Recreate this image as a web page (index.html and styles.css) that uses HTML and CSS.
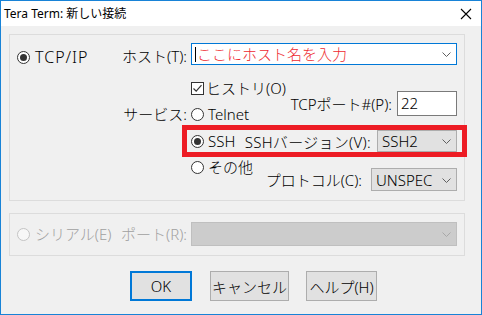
FILE: index.html
```html
<!DOCTYPE html>
<html lang="ja">

<head>
    <meta charset="UTF-8">
    <meta name="viewport" content="width=device-width, initial-scale=1.0">
    <title>Tera Term: 新しい接続</title>
    <link rel="stylesheet" href="styles.css">
</head>

<body>
    <div class="window">
        <div class="titlebar">
            <span class="title">Tera Term: 新しい接続</span>
            <svg class="close" width="12" height="12" viewBox="0 0 12 12">
                <path d="M1 1 L11 11 M11 1 L1 11" stroke="#000" stroke-width="1.1" fill="none" />
            </svg>
        </div>
        <div class="content">
            <!-- TCP/IP -->
            <div class="group tcp">
                <div class="proto">
                    <div class="opt big"><span class="radio on"></span><span class="tcpip">TCP/IP</span></div>
                </div>
                <div class="fields">
                    <div class="lbl host-lbl">ホスト(T):</div>
                    <div class="combo host">
                        <span class="caret"></span>
                        <span class="host-text">ここにホスト名を入力</span>
                        <svg class="chev" width="9" height="5" viewBox="0 0 9 5">
                            <path d="M0.5 0.5 L4.5 4.5 L8.5 0.5" fill="none" stroke="#606060" />
                        </svg>
                    </div>

                    <div class="lbl service-lbl">サービス:</div>
                    <div class="service">
                        <div class="service-opts">
                            <div class="opt chk">
                                <span class="check">
                                    <svg width="11" height="11" viewBox="0 0 11 11">
                                        <path d="M1.5 5.5 L4.2 8.2 L9.5 2.2" fill="none" stroke="#333" stroke-width="1.2" />
                                    </svg>
                                </span>ヒストリ(O)
                            </div>
                            <div class="opt"><span class="radio"></span>Telnet</div>
                        </div>
                        <div class="port">
                            <span>TCPポート#(P):</span>
                            <div class="edit">22</div>
                        </div>
                    </div>

                    <div class="row ssh">
                        <div class="opt"><span class="radio on"></span>SSH</div>
                        <div class="right">
                            <span class="ver-lbl">SSHバージョン(V):</span>
                            <div class="combo ver">SSH2
                                <svg class="chev" width="9" height="5" viewBox="0 0 9 5">
                                    <path d="M0.5 0.5 L4.5 4.5 L8.5 0.5" fill="none" stroke="#606060" />
                                </svg>
                            </div>
                        </div>
                    </div>

                    <div class="row other">
                        <div class="opt"><span class="radio"></span>その他</div>
                        <div class="right proto-sel">
                            <span>プロトコル(C):</span>
                            <div class="combo unspec">UNSPEC
                                <svg class="chev" width="9" height="5" viewBox="0 0 9 5">
                                    <path d="M0.5 0.5 L4.5 4.5 L8.5 0.5" fill="none" stroke="#606060" />
                                </svg>
                            </div>
                        </div>
                    </div>
                </div>
            </div>

            <!-- シリアル -->
            <div class="group serial">
                <div class="proto">
                    <div class="opt big off"><span class="radio dis"></span>シリアル(E)</div>
                </div>
                <div class="lbl off">ポート(R):</div>
                <div class="combo disabled">
                    <svg class="chev" width="9" height="5" viewBox="0 0 9 5">
                        <path d="M0.5 0.5 L4.5 4.5 L8.5 0.5" fill="none" stroke="#a8a8a8" />
                    </svg>
                </div>
            </div>

            <div class="buttons">
                <div class="btn default">OK</div>
                <div class="btn cancel">キャンセル</div>
                <div class="btn help">ヘルプ(H)</div>
            </div>
        </div>
    </div>
</body>

</html>
```

FILE: styles.css
```css
* {
    margin: 0;
    padding: 0;
    box-sizing: border-box;
}

body {
    width: 482px;
    height: 315px;
    overflow: hidden;
    font-family: "Noto Sans", "Noto Sans CJK JP", sans-serif;
    font-size: 15px;
    font-weight: 300;
    color: #000;
}

.window {
    display: flex;
    flex-direction: column;
    width: 482px;
    height: 315px;
    border: 1px solid #1883d7;
    background-color: #f0f0f0;
}

.titlebar {
    display: flex;
    align-items: center;
    justify-content: space-between;
    height: 25px;
    padding: 0 9px 0 3px;
    background-color: #fff;
}

.titlebar .title {
    font-size: 12px;
    font-weight: 400;
    line-height: 16px;
}

.content {
    flex: 1;
    padding: 8px 0 0 8px;
}

.group {
    display: flex;
    width: 456px;
    border: 1px solid #dcdcdc;
    padding: 8px 7px 9px 7px;
}

.proto {
    width: 106px;
    flex-shrink: 0;
}

.opt {
    display: flex;
    align-items: center;
    gap: 4px;
    height: 20px;
    line-height: 20px;
    white-space: nowrap;
}

.opt.big {
    gap: 5px;
}

.tcpip {
    letter-spacing: 1px;
    font-size: 16px;
}

.tcp .proto .opt {
    margin-top: 4px;
}

.opt.chk {
    gap: 2px;
}

.radio {
    position: relative;
    width: 13px;
    height: 13px;
    border: 1px solid #333;
    border-radius: 50%;
    background-color: #fff;
    flex-shrink: 0;
}

.radio.on::after {
    content: "";
    position: absolute;
    left: 2px;
    top: 2px;
    width: 7px;
    height: 7px;
    border-radius: 50%;
    background-color: #333;
}

.radio.dis {
    border-color: #c4c4c4;
    background-color: #f7f7f7;
}

.check {
    display: flex;
    align-items: center;
    justify-content: center;
    width: 13px;
    height: 13px;
    border: 1px solid #333;
    background-color: #fff;
    flex-shrink: 0;
}

.fields {
    display: grid;
    grid-template-columns: 64px 266px;
    column-gap: 4px;
}

.lbl {
    display: flex;
    justify-content: flex-end;
    line-height: 20px;
    white-space: nowrap;
}

.host-lbl {
    align-self: center;
    padding-top: 3px;
}

.service-lbl {
    align-self: end;
}

.combo {
    position: relative;
    display: flex;
    align-items: center;
    padding-left: 4px;
    background-color: #e1e1e1;
    border: 1px solid #adadad;
    white-space: nowrap;
}

.combo .chev {
    position: absolute;
    right: 5px;
    top: 50%;
    margin-top: -2px;
}

.combo.host {
    height: 22px;
    background-color: #fff;
    border-color: #0078d7;
    padding-left: 3px;
}

.caret {
    width: 1px;
    height: 15px;
    background-color: #000;
    margin-right: 1px;
}

.host-text {
    color: #ee2a2f;
    line-height: 20px;
}

.service {
    display: flex;
    justify-content: space-between;
    align-items: center;
    margin-top: 12px;
}

.service-opts {
    display: flex;
    flex-direction: column;
    gap: 6px;
}

.port {
    display: flex;
    align-items: center;
    gap: 5px;
    margin-top: 4px;
    white-space: nowrap;
}

.edit {
    width: 60px;
    height: 25px;
    padding-left: 3px;
    line-height: 23px;
    background-color: #fff;
    border: 1px solid #7a7a7a;
}

.row {
    grid-column: 2;
    display: flex;
    justify-content: space-between;
}

.row .right {
    display: flex;
    align-items: center;
    white-space: nowrap;
}

.ssh {
    position: relative;
    align-items: center;
    margin-top: 6px;
}

/* 赤枠 */
.ssh::before {
    content: "";
    position: absolute;
    left: -9px;
    right: -10px;
    top: -5px;
    bottom: -5px;
    border: 5px solid #ed1c24;
    pointer-events: none;
}

.ssh .right {
    gap: 6px;
}

.ver-lbl {
    letter-spacing: 0.3px;
}

.combo.ver {
    width: 80px;
    height: 22px;
}

.other {
    align-items: flex-start;
    margin-top: 5px;
}

.proto-sel {
    gap: 9px;
    margin-top: 11px;
}

.combo.unspec {
    width: 86px;
    height: 23px;
}

.group.serial {
    align-items: center;
    margin-top: 12px;
}

.serial .lbl {
    width: 64px;
    flex-shrink: 0;
}

.off {
    color: #a0a0a0;
}

.combo.disabled {
    width: 266px;
    height: 24px;
    margin-left: 4px;
    background-color: #cccccc;
    border-color: #bfbfbf;
}

.buttons {
    display: flex;
    margin-top: 15px;
    padding-left: 121px;
}

.btn {
    display: flex;
    align-items: center;
    justify-content: center;
    height: 30px;
    background-color: #e1e1e1;
    border: 1px solid #adadad;
    white-space: nowrap;
}

.btn.default {
    width: 62px;
    border: 2px solid #0078d7;
}

.btn.cancel {
    width: 79px;
    margin-left: 18px;
}

.btn.help {
    width: 71px;
    margin-left: 17px;
}
```
